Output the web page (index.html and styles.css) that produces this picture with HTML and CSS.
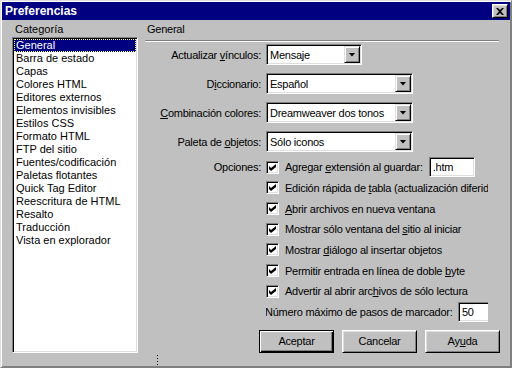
FILE: index.html
```html
<!DOCTYPE html>
<html lang="es">
<head>
<meta charset="UTF-8" />
<title>Preferencias</title>
<link rel="stylesheet" href="styles.css">
</head>
<body>

<div class="window">
  <div class="titlebar">
    <span class="title">Preferencias</span>
    <button class="close" aria-label="Cerrar">
      <svg width="8" height="7" viewBox="0 0 8 7"><path d="M0 0h2l2 2 2-2h2L5 3.5 8 7H6L4 5 2 7H0l3-3.5z" fill="#000"/></svg>
    </button>
  </div>

  <div class="content">
    <div class="cat">
      <div class="cat-label">Categoría</div>
      <ul class="listbox">
        <li class="sel">General</li>
        <li>Barra de estado</li>
        <li>Capas</li>
        <li>Colores HTML</li>
        <li>Editores externos</li>
        <li>Elementos invisibles</li>
        <li>Estilos CSS</li>
        <li>Formato HTML</li>
        <li>FTP del sitio</li>
        <li>Fuentes/codificación</li>
        <li>Paletas flotantes</li>
        <li>Quick Tag Editor</li>
        <li>Reescritura de HTML</li>
        <li>Resalto</li>
        <li>Traducción</li>
        <li>Vista en explorador</li>
      </ul>
    </div>

    <div class="panel">
      <div class="panel-head">General</div>
      <div class="sep"></div>

      <div class="row first">
        <span class="lbl">Actualizar <u>v</u>ínculos:</span>
        <div class="combo short"><span class="val">Mensaje</span><span class="drop"></span></div>
      </div>
      <div class="row">
        <span class="lbl">D<u>i</u>ccionario:</span>
        <div class="combo"><span class="val">Español</span><span class="drop"></span></div>
      </div>
      <div class="row">
        <span class="lbl"><u>C</u>ombinación colores:</span>
        <div class="combo"><span class="val">Dreamweaver dos tonos</span><span class="drop"></span></div>
      </div>
      <div class="row">
        <span class="lbl">Paleta de <u>o</u>bjetos:</span>
        <div class="combo"><span class="val">Sólo iconos</span><span class="drop"></span></div>
      </div>

      <div class="row options">
        <span class="lbl">Opciones:</span>
        <div class="opts">
          <div class="opt"><span class="check"><svg width="7" height="7" viewBox="0 0 7 7"><path d="M0 2l2 2 5-4v3L2 7 0 5z" fill="#000"/></svg></span><span class="txt">Agregar <u>e</u>xtensión al guardar:</span><span class="field htm">.htm</span></div>
          <div class="opt"><span class="check"><svg width="7" height="7" viewBox="0 0 7 7"><path d="M0 2l2 2 5-4v3L2 7 0 5z" fill="#000"/></svg></span><span class="txt">Edición rápida de <u>t</u>abla (actualización diferida)</span></div>
          <div class="opt"><span class="check"><svg width="7" height="7" viewBox="0 0 7 7"><path d="M0 2l2 2 5-4v3L2 7 0 5z" fill="#000"/></svg></span><span class="txt"><u>A</u>brir archivos en nueva ventana</span></div>
          <div class="opt"><span class="check"><svg width="7" height="7" viewBox="0 0 7 7"><path d="M0 2l2 2 5-4v3L2 7 0 5z" fill="#000"/></svg></span><span class="txt">Mostrar sólo ventana del <u>s</u>itio al iniciar</span></div>
          <div class="opt"><span class="check"><svg width="7" height="7" viewBox="0 0 7 7"><path d="M0 2l2 2 5-4v3L2 7 0 5z" fill="#000"/></svg></span><span class="txt">Mostrar <u>d</u>iálogo al insertar objetos</span></div>
          <div class="opt"><span class="check"><svg width="7" height="7" viewBox="0 0 7 7"><path d="M0 2l2 2 5-4v3L2 7 0 5z" fill="#000"/></svg></span><span class="txt">Permitir entrada en línea de doble <u>b</u>yte</span></div>
          <div class="opt"><span class="check"><svg width="7" height="7" viewBox="0 0 7 7"><path d="M0 2l2 2 5-4v3L2 7 0 5z" fill="#000"/></svg></span><span class="txt">Advertir al abrir arc<u>h</u>ivos de sólo lectura</span></div>
          <div class="opt num"><span class="txt">Número máximo de pasos de marcador:</span><span class="field steps">50</span></div>
        </div>
      </div>

      <div class="buttons">
        <button class="btn default">Aceptar</button>
        <button class="btn">Cancelar</button>
        <button class="btn">Ay<u>u</u>da</button>
      </div>
    </div>
  </div>

  <div class="footer"><span class="grip"></span></div>
</div>

</body>
</html>
```

FILE: styles.css
```css
body {
  margin: 0;
  background: #c0c0c0;
  font-family: "Liberation Sans", Arial, sans-serif;
  font-size: 11px;
  color: #000;
}
.window {
  width: 512px;
  height: 368px;
  box-sizing: border-box;
  background: #c0c0c0;
  border: 1px solid;
  border-color: #dfdfdf #808080 #808080 #dfdfdf;
  box-shadow: inset 1px 1px #fff, inset -1px -1px #808080;
  padding: 1px;
  display: flex;
  flex-direction: column;
}
/* Barra de título */
.titlebar {
  height: 18px;
  flex: none;
  background: #000080;
  color: #fff;
  display: flex;
  align-items: center;
  justify-content: space-between;
  padding: 0 2px 0 3px;
}
.title {
  font-weight: bold;
  font-size: 12px;
}
.close {
  width: 16px;
  height: 14px;
  box-sizing: border-box;
  padding: 0;
  background: #c0c0c0;
  border: 1px solid;
  border-color: #fff #000 #000 #fff;
  box-shadow: inset 1px 1px #dfdfdf, inset -1px -1px #808080;
  display: flex;
  align-items: center;
  justify-content: center;
}
.close svg {
  display: block;
}
/* Contenido */
.content {
  height: 334px;
  flex: none;
  display: flex;
}
.cat {
  margin-left: 10px;
  width: 126px;
}
.cat-label,
.panel-head {
  margin-top: 3px;
  line-height: 13px;
}
.cat-label {
  padding-left: 3px;
}
.listbox {
  list-style: none;
  margin: 1px 0 0;
  padding: 1px;
  height: 316px;
  box-sizing: border-box;
  background: #fff;
  border: 1px solid;
  border-color: #808080 #fff #fff #808080;
  box-shadow: inset 1px 1px #000, inset -1px -1px #dfdfdf;
}
.listbox li {
  line-height: 13px;
  padding-left: 2px;
  white-space: nowrap;
}
.listbox li.sel {
  background: #000080;
  color: #fff;
  outline: 1px dotted #ffff80;
  outline-offset: -1px;
}
.panel {
  margin-left: 7px;
  width: 354px;
  letter-spacing: -0.25px;
}
.panel-head {
  padding-left: 2px;
}
.sep {
  margin-top: 4px;
  border-top: 1px solid #808080;
  border-bottom: 1px solid #fff;
}
/* Filas del formulario */
.row {
  display: flex;
  align-items: center;
  margin-top: 8px;
}
.row.first {
  margin-top: 2px;
}
.lbl {
  flex: none;
  width: 116px;
  margin-right: 5px;
  text-align: right;
  white-space: nowrap;
}
.combo {
  width: 147px;
  height: 21px;
  box-sizing: border-box;
  padding: 1px;
  background: #fff;
  border: 1px solid;
  border-color: #808080 #fff #fff #808080;
  box-shadow: inset 1px 1px #000, inset -1px -1px #dfdfdf;
  display: flex;
  align-items: center;
}
.combo.short {
  width: 96px;
}
.combo .val {
  padding-left: 2px;
  white-space: nowrap;
}
.drop {
  margin-left: auto;
  width: 16px;
  height: 17px;
  box-sizing: border-box;
  background: #c0c0c0;
  border: 1px solid;
  border-color: #dfdfdf #000 #000 #dfdfdf;
  box-shadow: inset 1px 1px #fff, inset -1px -1px #808080;
  display: flex;
  align-items: center;
  justify-content: center;
}
.drop::after {
  content: "";
  width: 7px;
  height: 4px;
  background: #000;
  clip-path: polygon(0 0, 100% 0, 50% 100%);
}
/* Opciones */
.row.options {
  margin-top: 5px;
  align-items: flex-start;
}
.row.options .lbl {
  line-height: 20px;
}
.opts {
  width: 222px;
  overflow: hidden;
  display: flex;
  flex-direction: column;
}
.opt {
  height: 20.67px;
  display: flex;
  align-items: center;
  white-space: nowrap;
}
.check {
  flex: none;
  width: 13px;
  height: 13px;
  box-sizing: border-box;
  margin-right: 6px;
  background: #fff;
  border: 1px solid;
  border-color: #808080 #fff #fff #808080;
  box-shadow: inset 1px 1px #000, inset -1px -1px #dfdfdf;
  display: flex;
  align-items: center;
  justify-content: center;
}
.check svg {
  display: block;
}
.field {
  flex: none;
  height: 20px;
  box-sizing: border-box;
  padding-left: 3px;
  background: #fff;
  border: 1px solid;
  border-color: #808080 #fff #fff #808080;
  box-shadow: inset 1px 1px #000, inset -1px -1px #dfdfdf;
  display: flex;
  align-items: center;
}
.field.htm {
  width: 46px;
  margin-left: 6px;
}
.opt.num {
  height: 20px;
  width: 225px;
  margin-left: -1px;
  justify-content: space-between;
}
.field.steps {
  width: 32px;
}
/* Botones */
.buttons {
  display: flex;
  justify-content: flex-end;
  gap: 8px;
  margin-top: 8px;
  margin-right: -1px;
}
.btn {
  width: 75px;
  height: 23px;
  padding: 0;
  font: inherit;
  letter-spacing: inherit;
  color: #000;
  background: #c0c0c0;
  border: 1px solid;
  border-color: #fff #000 #000 #fff;
  box-shadow: inset 1px 1px #dfdfdf, inset -1px -1px #808080;
}
.btn.default {
  border-color: #000;
  box-shadow: inset 1px 1px #fff, inset -1px -1px #000, inset -2px -2px #808080;
}
.footer {
  flex: 1;
}
.grip {
  display: block;
  margin: 1px 0 0 155px;
  width: 1px;
  height: 11px;
  background: repeating-linear-gradient(#000 0 1px, transparent 1px 3px);
}
```
